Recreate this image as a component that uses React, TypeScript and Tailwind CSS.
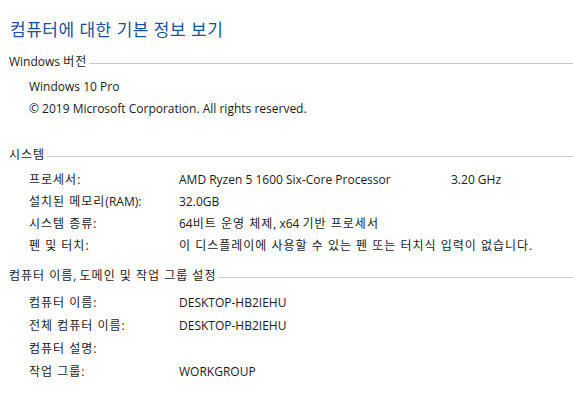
import React from 'react';

const font = { fontFamily: '"Open Sans", "Noto Sans CJK KR", sans-serif' };

// Malgun Gothic sets Hangul a little wider than Noto CJK, so widen Hangul runs
const Ko: React.FC<{ text: string; track?: string }> = ({ text, track = 'tracking-[1px]' }) => (
  <>
    {text.split(/([\uAC00-\uD7A3][\uAC00-\uD7A3 ]*)/).map((part, i) =>
      /[\uAC00-\uD7A3]/.test(part) ? (
        <span key={i} className={track}>
          {part}
        </span>
      ) : (
        <React.Fragment key={i}>{part}</React.Fragment>
      ),
    )}
  </>
);

const SectionHeader: React.FC<{ title: string; className?: string }> = ({ title, className = '' }) => (
  <div className={`flex items-center h-[20px] ${className}`}>
    <span className="text-[12px] text-[#1a1a1a] whitespace-nowrap">
      <Ko text={title} />
    </span>
    <div className="flex-1 h-px bg-[#c8c8c8] ml-[2px] mt-[2px]" />
  </div>
);

const Row: React.FC<{ label: string; value?: string; extra?: string; h?: string }> = ({
  label,
  value,
  extra,
  h = 'h-[22px]',
}) => (
  <div className={`flex items-center ${h} pl-[20px] text-[12px] text-[#1a1a1a] whitespace-nowrap`}>
    <span className="w-[150px]">
      <Ko text={label} />
    </span>
    <span className={extra ? 'w-[272px]' : ''}>{value && <Ko text={value} />}</span>
    {extra && <span>{extra}</span>}
  </div>
);

const App: React.FC = () => {
  return (
    <div className="w-[573px] h-[396px] bg-white pl-[9px] pt-[18px] overflow-hidden" style={font}>
      <div className="h-[24px] flex items-center pl-[1px] text-[17px] text-[#1e4f9c] tracking-[0.5px]">
        컴퓨터에 대한 기본 정보 보기
      </div>

      <SectionHeader title="Windows 버전" className="mt-[10px]" />
      <div className="mt-[4px]">
        <Row label="Windows 10 Pro" />
        <Row label="© 2019 Microsoft Corporation. All rights reserved." />
      </div>

      <SectionHeader title="시스템" className="mt-[25px]" />
      <div className="mt-[4px]">
        <Row label="프로세서:" value="AMD Ryzen 5 1600 Six-Core Processor" extra="3.20 GHz" />
        <Row label="설치된 메모리(RAM):" value="32.0GB" />
        <Row label="시스템 종류:" value="64비트 운영 체제, x64 기반 프로세서" />
        <Row label="펜 및 터치:" value="이 디스플레이에 사용할 수 있는 펜 또는 터치식 입력이 없습니다." />
      </div>

      <SectionHeader title="컴퓨터 이름, 도메인 및 작업 그룹 설정" className="mt-[9px]" />
      <div className="mt-[5px]">
        <Row h="h-[23px]" label="컴퓨터 이름:" value="DESKTOP-HB2IEHU" />
        <Row h="h-[23px]" label="전체 컴퓨터 이름:" value="DESKTOP-HB2IEHU" />
        <Row h="h-[23px]" label="컴퓨터 설명:" />
        <Row h="h-[23px]" label="작업 그룹:" value="WORKGROUP" />
      </div>
    </div>
  );
};

export default App;
